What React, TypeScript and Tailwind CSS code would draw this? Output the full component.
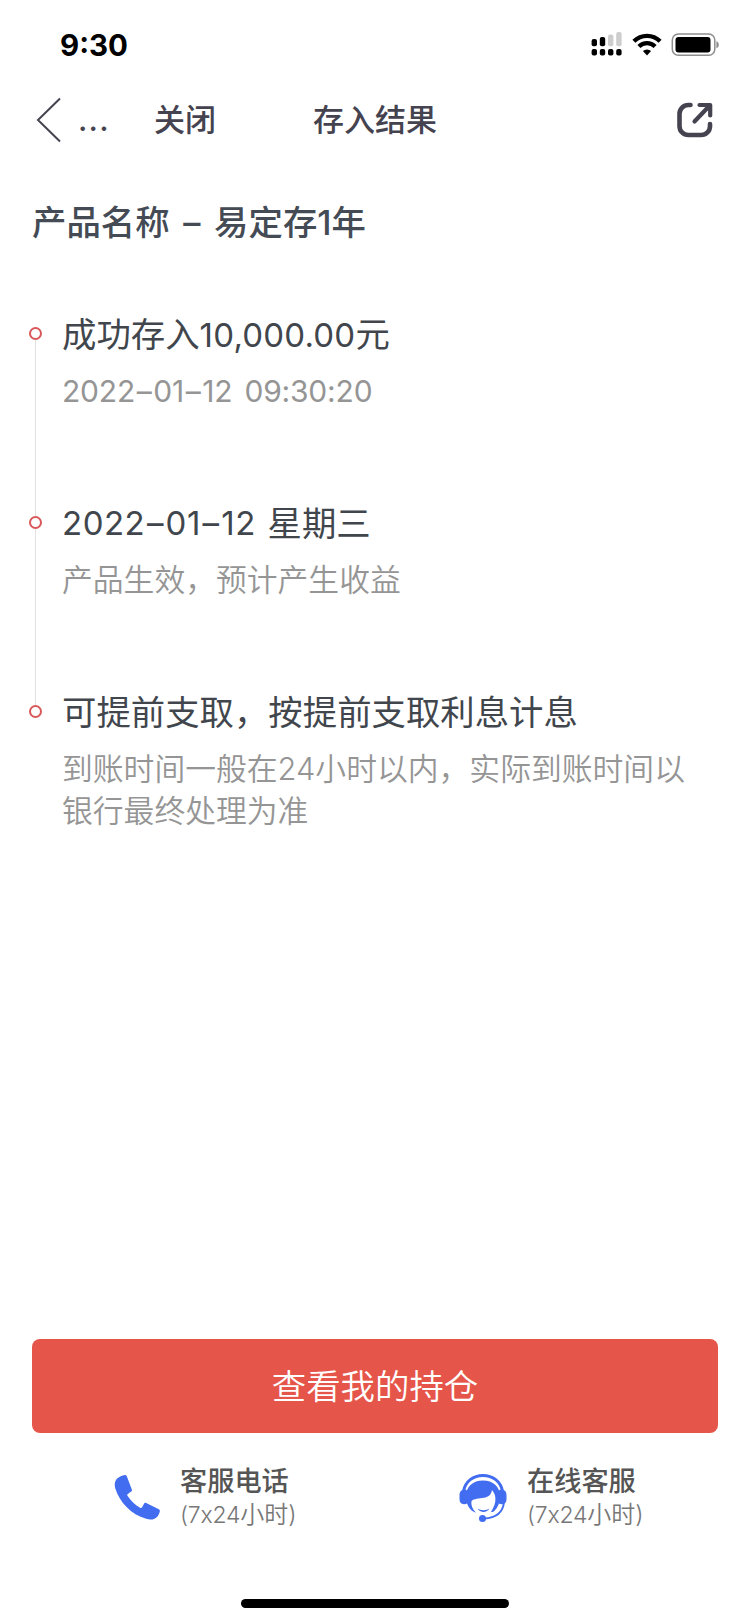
import React from 'react';

interface Step {
  id: number;
  title: React.ReactNode;
  detail: React.ReactNode;
}

const StatusBar: React.FC = () => (
  <div className="flex h-[88px] items-start justify-between pl-[60px] pr-[31px] pt-[31px]">
    <span className="font-['Inter',sans-serif] text-[29.5px] font-bold leading-[29px] text-black">9:30</span>
    <div className="flex items-start">
      {/* Dual SIM signal */}
      <svg width="32" height="25" viewBox="0 0 32 25">
        <g fill="#000">
          <rect x="0.6" y="8" width="5.4" height="7.3" rx="2" />
          <rect x="8.8" y="6" width="5.4" height="9.3" rx="2" />
          <rect x="0.6" y="18" width="5.4" height="6.4" rx="2" />
          <rect x="8.8" y="18" width="5.4" height="6.4" rx="2" />
          <rect x="17" y="18" width="5.4" height="6.4" rx="2" />
          <rect x="25.2" y="18" width="5.4" height="6.4" rx="2" />
        </g>
        <g fill="#cdcdcd">
          <rect x="17" y="3.6" width="5.4" height="11.7" rx="2" />
          <rect x="25.2" y="1" width="5.4" height="14.3" rx="2" />
        </g>
      </svg>
      <svg className="ml-[9px]" width="30" height="25" viewBox="0 0 30 25">
        <g fill="none" stroke="#000" strokeWidth="4.2">
          <path d="M1.9 10.3a18.4 18.4 0 0 1 26.2 0" />
          <path d="M6.9 15.4a11.5 11.5 0 0 1 16.2 0" />
        </g>
        <path d="M15 24.4l-4.1-4.3a6 6 0 0 1 8.2 0z" />
      </svg>
      <svg className="ml-[9px] mt-[2px]" width="48" height="24" viewBox="0 0 48 24">
        <rect x="1.3" y="1" width="42.5" height="21.3" rx="6" fill="none" stroke="#8e8e8e" strokeWidth="1.5" />
        <rect x="4.5" y="4" width="35" height="15.4" rx="3" />
        <path d="M45.4 8.2c3.2 1 3.2 6 0 7z" fill="#8e8e8e" />
      </svg>
    </div>
  </div>
);

const NavBar: React.FC = () => (
  <div className="flex h-[64px] items-center pl-[36px] pr-[36px] text-[31px] leading-[44px] text-[#45434f]">
    <svg width="26" height="46" viewBox="0 0 26 46" fill="none" stroke="currentColor" strokeWidth="2">
      <path d="M24 1.5L2 23l22 21.5" />
    </svg>
    <span className="ml-[16px] w-[35px] font-['Inter',sans-serif] font-medium tracking-[1.2px]">...</span>
    <span className="ml-[41px] w-[66px] font-medium">关闭</span>
    <h1 className="ml-[93px] grow font-medium">存入结果</h1>
    <svg width="38" height="38" viewBox="0 0 38 38" fill="none" stroke="currentColor" strokeWidth="4.6" strokeLinecap="round">
      <path d="M14.5 4h-2.2A8.8 8.8 0 0 0 3.5 12.8v12.4a8.8 8.8 0 0 0 8.8 8.8h12.9a8.8 8.8 0 0 0 8.8-8.8V23" />
      <path d="M18.5 20.5L33 5.2M23.5 4H34.2v10.5" strokeLinejoin="round" strokeWidth="4.2" />
    </svg>
  </div>
);

const DateText: React.FC<{ value: string }> = ({ value }) => (
  <>
    {value.split('-').map((part, index) => (
      <React.Fragment key={index}>
        {index > 0 && <span className="px-[1.7px]">–</span>}
        {part}
      </React.Fragment>
    ))}
  </>
);

const steps: Step[] = [
  {
    id: 1,
    title: (
      <>
        成功存入<span className="text-[33px] tracking-[0.2px]">10,000.00</span>元
      </>
    ),
    detail: (
      <span className="align-[1px] text-[30px] font-normal tracking-[-0.2px] [word-spacing:4px]">
        <DateText value="2022-01-12" /> 09:30:20
      </span>
    ),
  },
  {
    id: 2,
    title: (
      <>
        <span className="align-[1px] text-[33px] tracking-[0.5px] [word-spacing:2px]">
          <DateText value="2022-01-12" />{' '}
        </span>
        星期三
      </>
    ),
    detail: '产品生效，预计产生收益',
  },
  {
    id: 3,
    title: '可提前支取，按提前支取利息计息',
    detail: (
      <>
        到账时间一般在24小时以内，实际到账时间以
        <br />
        银行最终处理为准
      </>
    ),
  },
];

const PhoneIcon: React.FC = () => (
  <svg width="48" height="48" viewBox="0 0 48 48" fill="#436df0">
    <path d="M2.8 4.8C5 2.8 8.4 1.2 10.8 1c1-.1 1.6.3 2 1.2l5 13.2c.4 1 .2 1.700-.6 2.200l-3.400 2.300c-.7.5-.8 1.100-.3 1.900 3.600 5.400 7.700 9.300 12.600 12 .9.400 1.500.2 2-.6l1.900-3.500c.5-.9 1.200-1.100 2.200-.6l12.600 6.200c.9.500 1.200 1.100 1 2.100-.7 3.300-2.500 6-5.300 7.300-2.400 1.100-5.200 1.100-8.300.1C17 40.500 5.500 28 1.300 14.500.3 11 .500 7.500 2.800 4.800z" />
  </svg>
);

const AgentIcon: React.FC = () => (
  <svg width="48" height="50" viewBox="0 0 48 50">
    <g fill="#436df0">
      <path d="M5.5 16.5C9 16 8 19 8.3 24s1.2 7-3 7.200C2 31.400.5 29.500.5 26v-4c0-3.300 1.700-5.300 5-5.500z" />
      <path d="M42.5 16.5C39 16 40 19 39.700 24s-1.200 7 3 7.200c3.300.2 4.800-1.700 4.800-5.200v-4c0-3.300-1.700-5.300-5-5.500z" />
      <path d="M7 23C7 13.500 14 7.400 24 7.400S41 13.500 41 23c0 6.500-2 11.500-6 15.300-1 .8-2.200.9-3.200.9C35 34 36.800 30 36.400 25c-.3-3-1.200-5.500-3.400-8-1 5-3.500 6.800-8 7.800-5 1-10 .8-12.500 3.200-.8 4.300 1 8 4.500 11.800C10.500 37.500 7 31.500 7 23z" />
      <path d="M18.500 35.500c3.500 2.200 8.500 2.200 12 0-2.500 4.600-9.500 4.600-12 0z" />
      <circle cx="23.5" cy="45.5" r="3.5" />
    </g>
    <g fill="none" stroke="#436df0">
      <path d="M4.5 18C6.500 8.500 14 2.500 24 2.500S41.500 8.500 43.500 18" strokeWidth="3" />
      <path d="M45 29c-1 10-7.500 16-20 16.500" strokeWidth="2" />
    </g>
  </svg>
);

const Contact: React.FC<{ label: string }> = ({ label }) => (
  <div>
    <p className="text-[27.2px] font-medium leading-[34px] text-[#555]">{label}</p>
    <p className="text-[24px] font-[350] leading-[32px] text-[#777]">
      <span className="text-[23px] tracking-[-0.2px] [font-feature-settings:'calt'_0]">(7x24</span>小时)
    </p>
  </div>
);

export default function App() {
  return (
    <div className="flex h-[1623px] w-[750px] flex-col bg-white font-['Inter','Noto_Sans_CJK_SC',sans-serif]">
      <StatusBar />
      <NavBar />

      <h2 className="mt-[46px] pl-[32px] text-[34.4px] font-medium leading-[50px] text-[#444b54] [word-spacing:4.5px]">
        产品名称 – 易定存1年
      </h2>

      <ol className="mt-[61px] pl-[28px] pr-[40px]">
        {steps.map((step, index) => (
          <li key={step.id} className="flex h-[189px] gap-[20px]">
            <div className="flex w-[15px] flex-col items-center pt-[18px]">
              <span className="size-[13px] shrink-0 rounded-full border-2 border-[#d9585a]" />
              {index < steps.length - 1 && <span className="-mb-[18px] w-px grow bg-[#e2e2e2]" />}
            </div>
            <div className="-ml-px whitespace-nowrap">
              <h3 className="h-[51px] text-[34.4px] leading-[51px] text-[#41464d]">{step.title}</h3>
              <p className="mt-[10px] text-[30.8px] font-[350] leading-[42px] text-[#959595]">{step.detail}</p>
            </div>
          </li>
        ))}
      </ol>

      <div className="mt-auto px-[32px]">
        <button className="h-[94px] w-full rounded-lg bg-[#e65549] pt-[2px] text-[34.4px] font-[350] text-white">
          查看我的持仓
        </button>
      </div>
      <div className="mt-[32px] flex items-center pl-[114px]">
        <PhoneIcon />
        <div className="ml-[18px] w-[279px]">
          <Contact label="客服电话" />
        </div>
        <AgentIcon />
        <div className="ml-[20px]">
          <Contact label="在线客服" />
        </div>
      </div>
      <div className="mx-auto mb-[15px] mt-[68px] h-[9px] w-[268px] rounded-full bg-black" />
    </div>
  );
}
